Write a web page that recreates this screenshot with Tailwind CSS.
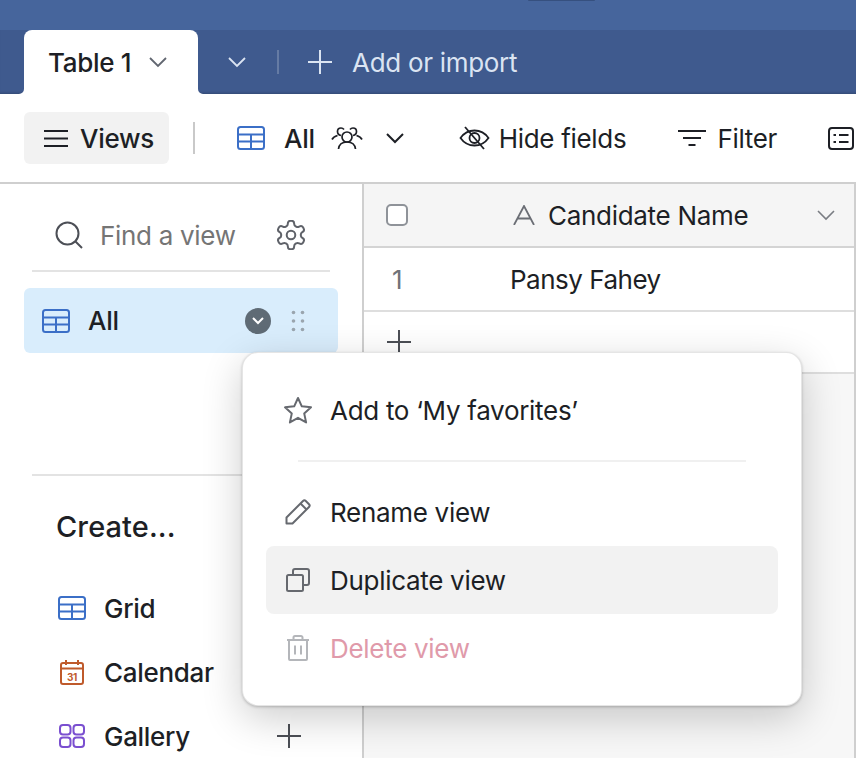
<!DOCTYPE html>
<html lang="en">
<head>
    <meta charset="UTF-8">
    <title>Table 1 - Views</title>
    <script src="https://cdn.jsdelivr.net/npm/@tailwindcss/browser@4"></script>
</head>
<body class="bg-white">
    <div class="relative w-[856px] h-[758px] overflow-hidden flex flex-col font-['Inter',sans-serif] text-[26px] tracking-[-0.3px] text-[#1d1f25]">
        <!-- Top bar -->
        <div class="h-[30px] flex-none bg-[#46659c] flex justify-start pl-[528px]">
            <div class="w-[67px] h-[1px] bg-[#36507f] rounded-b"></div>
        </div>

        <!-- Table tabs -->
        <div class="h-[64px] flex-none bg-[#3f5a8e] flex items-end pl-[24px] shadow-[inset_0_-3px_3px_-2px_rgba(0,0,0,0.2)]">
            <div class="relative w-[174px] h-[64px] bg-white rounded-t-lg flex items-center pl-[24px] font-medium">
                <svg class="absolute left-[-5px] bottom-0" width="5" height="5" viewBox="0 0 5 5" fill="white"><path d="M5 0v5H0a5 5 0 0 0 5-5z"/></svg>
                <svg class="absolute right-[-5px] bottom-0" width="5" height="5" viewBox="0 0 5 5" fill="white"><path d="M0 0v5h5a5 5 0 0 1-5-5z"/></svg>
                <span>Table 1</span>
                <svg class="ml-[18px] text-[#616670]" width="18" height="11" viewBox="0 0 18 11" fill="none" stroke="currentColor" stroke-width="1.8"><path d="M1 1l8 8 8-8"/></svg>
            </div>
            <div class="h-[64px] flex items-center text-[#dbe4f2]">
                <svg class="ml-[30px]" width="18" height="11" viewBox="0 0 18 11" fill="none" stroke="currentColor" stroke-width="1.8"><path d="M1 1l8 8 8-8"/></svg>
                <div class="ml-[31px] w-[2px] h-[24px] bg-white/20"></div>
                <svg class="ml-[29px]" width="24" height="24" viewBox="0 0 24 24" fill="none" stroke="currentColor" stroke-width="2"><path d="M12 0v24M0 12h24"/></svg>
                <span class="ml-[20px] whitespace-nowrap">Add or import</span>
            </div>
        </div>

        <!-- View bar -->
        <div class="h-[88px] flex-none flex items-center pl-[24px] bg-white border-b-2 border-[#cfcfcf] box-content">
            <div class="w-[145px] flex-none h-[52px] bg-[#f2f2f2] rounded-md flex items-center pl-[20px] font-medium">
                <svg width="24" height="19" viewBox="0 0 24 19" fill="none" stroke="#1d1f25" stroke-width="2"><path d="M0 2h24M0 9.500h24M0 17h24"/></svg>
                <span class="ml-[12px]">Views</span>
            </div>
            <div class="ml-[24px] flex-none w-[2px] h-[32px] bg-[#c9c9c9]"></div>
            <svg class="ml-[42px] flex-none" width="28" height="24" viewBox="0 0 28 24" fill="none" stroke="#3b6fc7" stroke-width="2"><rect x="1" y="1" width="26" height="22" rx="2.500"/><path d="M1 8.500h26M1 15.500h26M14 8.500v14.500"/></svg>
            <span class="ml-[19px] font-medium">All</span>
            <svg class="ml-[16px] flex-none" width="32" height="24" viewBox="0 0 32 24" fill="none" stroke="#1d1f25" stroke-width="1.700"><circle cx="16" cy="11" r="5"/><path d="M7.500 23c.5-4.500 4-7 8.500-7s8 2.500 8.500 7"/><path d="M10 9.500C7.500 9 6.500 7.500 6.500 5.500 6.500 3.500 8 2 10 2c1.200 0 2.300.6 3 1.500"/><path d="M6.500 9.500C4 10.300 2 11.500 1 13.500"/><path d="M22 9.500c2.500-.5 3.500-2 3.500-4 0-2-1.500-3.500-3.500-3.500-1.200 0-2.300.6-3 1.500"/><path d="M25.500 9.500c2.500.8 4.500 2 5.500 4"/></svg>
            <svg class="ml-[23px] flex-none" width="18" height="11" viewBox="0 0 18 11" fill="none" stroke="#1d1f25" stroke-width="2"><path d="M1 1l8 8 8-8"/></svg>
            <svg class="ml-[55px] flex-none" width="31" height="24" viewBox="0 0 31 24" fill="none" stroke="#1d1f25" stroke-width="1.800"><path d="M1.500 12C5 7 10 4.500 15.500 4.500S26 7 29.500 12c-3.500 5-8.500 7.500-14 7.500S5 17 1.500 12z"/><circle cx="15.500" cy="12" r="5"/><path d="M6 1l19 22"/></svg>
            <span class="ml-[9px] whitespace-nowrap">Hide fields</span>
            <svg class="ml-[52px] flex-none" width="28" height="18" viewBox="0 0 28 18" fill="none" stroke="#1d1f25" stroke-width="2"><path d="M0 2h28M5 9h18M10.500 16h7"/></svg>
            <span class="ml-[11px]">Filter</span>
            <svg class="ml-[51px] flex-none" width="26" height="23" viewBox="0 0 26 23" fill="none" stroke="#1d1f25" stroke-width="2"><rect x="1" y="1" width="24" height="21" rx="3"/><path d="M5.500 8h2.500M5.500 15h2.500M11 8h9.500M11 15h9.500"/></svg>
        </div>

        <!-- Main -->
        <div class="flex-1 flex min-h-0">
            <!-- Sidebar -->
            <div class="w-[364px] flex-none border-r-2 border-[#cfcfcf] flex flex-col px-[24px]">
                <div class="mx-[8px] h-[88px] flex-none flex items-center border-b-2 border-[#e3e3e3] pl-[23px] pt-[16px]">
                    <svg class="flex-none" width="28" height="28" viewBox="0 0 28 28" fill="none" stroke="#4c4f56" stroke-width="2"><circle cx="12.500" cy="12.500" r="11"/><path d="M20.500 20.500l6.500 6.500"/></svg>
                    <span class="ml-[17px] text-[#757575] whitespace-nowrap">Find a view</span>
                    <svg class="ml-[40px] flex-none" width="30" height="30" viewBox="1.500 1.500 21 21" fill="none" stroke="#5f6269" stroke-width="1.400"><path d="M12.220 2h-.44a2 2 0 0 0-2 2v.18a2 2 0 0 1-1 1.730l-.43.250a2 2 0 0 1-2 0l-.15-.080a2 2 0 0 0-2.730.730l-.22.380a2 2 0 0 0 .730 2.730l.15.100a2 2 0 0 1 1 1.720v.510a2 2 0 0 1-1 1.740l-.15.090a2 2 0 0 0-.730 2.730l.22.380a2 2 0 0 0 2.730.730l.15-.080a2 2 0 0 1 2 0l.43.250a2 2 0 0 1 1 1.730V20a2 2 0 0 0 2 2h.44a2 2 0 0 0 2-2v-.18a2 2 0 0 1 1-1.730l.43-.250a2 2 0 0 1 2 0l.15.080a2 2 0 0 0 2.730-.730l.22-.390a2 2 0 0 0-.730-2.730l-.15-.080a2 2 0 0 1-1-1.740v-.5a2 2 0 0 1 1-1.740l.15-.090a2 2 0 0 0 .730-2.730l-.22-.380a2 2 0 0 0-2.730-.730l-.15.080a2 2 0 0 1-2 0l-.43-.250a2 2 0 0 1-1-1.730V4a2 2 0 0 0-2-2z"/><circle cx="12" cy="12" r="3"/></svg>
                </div>
                <div class="mt-[16px] h-[65px] flex-none bg-[#d9edfc] rounded-md flex items-center pl-[18px] font-medium">
                    <svg class="flex-none" width="28" height="24" viewBox="0 0 28 24" fill="none" stroke="#3b6fc7" stroke-width="2"><rect x="1" y="1" width="26" height="22" rx="2.500"/><path d="M1 8.500h26M1 15.500h26M14 8.500v14.500"/></svg>
                    <span class="ml-[18px]">All</span>
                    <div class="ml-[126px] flex-none w-[26px] h-[26px] rounded-full bg-[#5f6b75] flex items-center justify-center">
                        <svg width="12" height="8" viewBox="0 0 12 8" fill="none" stroke="white" stroke-width="2"><path d="M1 1l5 5 5-5"/></svg>
                    </div>
                    <svg class="ml-[20px] flex-none" width="14" height="22" viewBox="0 0 14 22" fill="#9aa5ae"><circle cx="2.500" cy="2.500" r="1.800"/><circle cx="11.500" cy="2.500" r="1.800"/><circle cx="2.500" cy="11" r="1.800"/><circle cx="11.500" cy="11" r="1.800"/><circle cx="2.500" cy="19.500" r="1.800"/><circle cx="11.500" cy="19.500" r="1.800"/></svg>
                </div>
                <div class="mx-[8px] mt-[121px] h-[2px] flex-none bg-[#e3e3e3]"></div>
                <div class="mt-[31px] pl-[32px] text-[29px] tracking-[0.1px] font-medium leading-[40px]">Create...</div>
                <div class="mt-[41px] pl-[34px] flex items-center h-[40px] font-medium">
                    <svg class="flex-none" width="28" height="24" viewBox="0 0 28 24" fill="none" stroke="#3b6fc7" stroke-width="2"><rect x="1" y="1" width="26" height="22" rx="2.500"/><path d="M1 8.500h26M1 15.500h26M14 8.500v14.500"/></svg>
                    <span class="ml-[18px]">Grid</span>
                </div>
                <div class="mt-[24px] pl-[36px] flex items-center h-[40px] font-medium">
                    <svg class="flex-none" width="24" height="25" viewBox="0 0 24 25" fill="none" stroke="#bf5a2b" stroke-width="2"><rect x="1" y="3" width="22" height="21" rx="2"/><path d="M1 8.500h22M6 0v5M18 0v5"/><text x="12" y="21" text-anchor="middle" font-size="10" font-weight="700" fill="#bf5a2b" stroke="none" font-family="Inter">31</text></svg>
                    <span class="ml-[20px]">Calendar</span>
                </div>
                <div class="mt-[24px] pl-[35px] flex items-center h-[40px] font-medium">
                    <svg class="flex-none" width="26" height="24" viewBox="0 0 26 24" fill="none" stroke="#7a4fd0" stroke-width="2"><rect x="1" y="1" width="10.500" height="9.500" rx="3"/><rect x="14.500" y="1" width="10.500" height="9.500" rx="3"/><rect x="1" y="13.500" width="10.500" height="9.500" rx="3"/><rect x="14.500" y="13.500" width="10.500" height="9.500" rx="3"/></svg>
                    <span class="ml-[19px]">Gallery</span>
                    <svg class="ml-[87px] flex-none" width="24" height="24" viewBox="0 0 24 24" fill="none" stroke="#4c4f56" stroke-width="2"><path d="M12 0v24M0 12h24"/></svg>
                </div>
            </div>

            <!-- Grid -->
            <div class="flex-1 bg-[#f7f7f7] border-r-2 border-[#cfcfcf] flex flex-col">
                <div class="h-[64px] flex-none bg-[#f5f5f5] border-b-2 border-[#d4d4d4] flex items-center pl-[22px]">
                    <div class="w-[22px] h-[22px] flex-none rounded-[5px] border-2 border-[#8f9399] bg-white"></div>
                    <svg class="ml-[105px] flex-none" width="22" height="20" viewBox="0 0 22 20" fill="none" stroke="#6b6e75" stroke-width="1.800"><path d="M1 20L11 1l10 19M4.500 13.500h13"/></svg>
                    <span class="ml-[13px] whitespace-nowrap">Candidate Name</span>
                    <svg class="ml-[69px] flex-none" width="18" height="11" viewBox="0 0 18 11" fill="none" stroke="#7a7d83" stroke-width="1.600"><path d="M1 1l8 8 8-8"/></svg>
                </div>
                <div class="h-[64px] flex-none bg-white border-b-2 border-[#dedede] flex items-center">
                    <span class="w-[146px] flex-none pl-[28px] text-[#6f7278]">1</span>
                    <span class="tracking-[-0.5px]">Pansy Fahey</span>
                </div>
                <div class="h-[62px] flex-none bg-white border-b-2 border-[#dedede] flex items-center pl-[23px]">
                    <svg width="24" height="24" viewBox="0 0 24 24" fill="none" stroke="#4c4f56" stroke-width="2"><path d="M12 0v24M0 12h24"/></svg>
                </div>
            </div>
        </div>

        <!-- View menu -->
        <div class="absolute left-[242px] top-[352px] w-[560px] bg-white rounded-2xl border border-black/10 shadow-[0_12px_40px_rgba(0,0,0,0.2),0_1px_3px_rgba(0,0,0,0.22)] py-[23px] px-[23px] flex flex-col">
            <div class="h-[68px] flex items-center pl-[17px]">
                <svg class="flex-none" width="30" height="28" viewBox="0 0 30 28" fill="none" stroke="#66696f" stroke-width="2" stroke-linejoin="round"><path d="M15 2l3.800 8.300 9.200 1-6.800 6.100 1.900 9-8.100-4.600-8.100 4.600 1.900-9L2 11.300l9.200-1z"/></svg>
                <span class="ml-[17px] whitespace-nowrap">Add to ‘My favorites’</span>
            </div>
            <div class="my-[16px] mx-[32px] h-[2px] bg-[#f0f0f0]"></div>
            <div class="h-[68px] flex items-center pl-[19px]">
                <svg class="flex-none" width="26" height="26" viewBox="0 0 26 26" fill="none" stroke="#66696f" stroke-width="2" stroke-linejoin="round"><path d="M1.500 24.500v-6L18 2a2 2 0 0 1 2.800 0l3.200 3.200a2 2 0 0 1 0 2.800L7.500 24.500z"/><path d="M15.500 4.500l6 6"/></svg>
                <span class="ml-[19px]">Rename view</span>
            </div>
            <div class="h-[68px] flex items-center pl-[20px] bg-[#f2f2f2] rounded-lg">
                <svg class="flex-none" width="24" height="24" viewBox="0 0 24 24" fill="none" stroke="#66696f" stroke-width="2"><rect x="1" y="7" width="16" height="16" rx="1.500"/><path d="M7 7V3a2 2 0 0 1 2-2h12a2 2 0 0 1 2 2v12a2 2 0 0 1-2 2h-4"/></svg>
                <span class="ml-[20px]">Duplicate view</span>
            </div>
            <div class="h-[68px] flex items-center pl-[21px]">
                <svg class="flex-none" width="22" height="26" viewBox="0 0 22 26" fill="none" stroke="#b4b6ba" stroke-width="2"><path d="M0 5h22M2 5v19a1 1 0 0 0 1 1h16a1 1 0 0 0 1-1V5M6.500 5V2.500A1.500 1.500 0 0 1 8 1h6a1.500 1.500 0 0 1 1.500 1.500V5M8 10.500v9M14 10.500v9"/></svg>
                <span class="ml-[21px] text-[#e09aaa]">Delete view</span>
            </div>
        </div>
    </div>
</body>
</html>
